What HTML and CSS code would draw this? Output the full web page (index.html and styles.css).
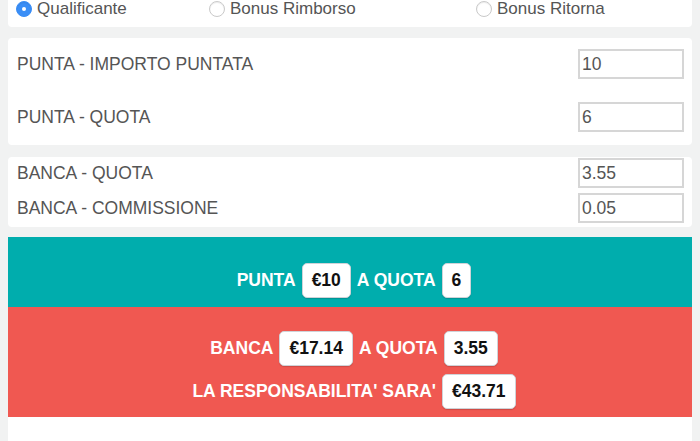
FILE: index.html
```html
<!DOCTYPE html>
<html lang="it">
<head>
<meta charset="utf-8">
<title>Calcolatore</title>
<link rel="stylesheet" href="styles.css">
</head>
<body>
<div class="panel radios">
  <label class="radio"><span class="dot checked"></span>Qualificante</label>
  <label class="radio"><span class="dot"></span>Bonus Rimborso</label>
  <label class="radio"><span class="dot"></span>Bonus Ritorna</label>
</div>
<div class="panel fields punta">
  <div class="row"><span class="label">PUNTA - IMPORTO PUNTATA</span><span class="input">10</span></div>
  <div class="row"><span class="label">PUNTA - QUOTA</span><span class="input">6</span></div>
</div>
<div class="panel fields banca">
  <div class="row"><span class="label">BANCA - QUOTA</span><span class="input">3.55</span></div>
  <div class="row"><span class="label">BANCA - COMMISSIONE</span><span class="input">0.05</span></div>
</div>
<div class="results">
  <div class="block teal">
    <div class="line">PUNTA <span class="badge">€10</span> A QUOTA <span class="badge">6</span></div>
  </div>
  <div class="block red">
    <div class="line">BANCA <span class="badge">€17.14</span> A QUOTA <span class="badge">3.55</span></div>
    <div class="line">LA RESPONSABILITA' SARA' <span class="badge">€43.71</span></div>
  </div>
  <div class="rest"></div>
</div>
</body>
</html>
```
FILE: styles.css
```css
html, body {
  margin: 0;
  padding: 0;
  background: #f1f2f2;
  font-family: "Liberation Sans", Arial, sans-serif;
  font-size: 17.5px;
  color: #555;
}
body {
  padding: 0 8px;
  height: 441px;
  overflow: hidden;
}
.panel {
  background: #fff;
  border-radius: 4px;
}
.radios {
  display: grid;
  grid-template-columns: 193px 267px 1fr;
  padding: 1px 8px 10px;
  height: 16px;
  margin-bottom: 11px;
  border-top-left-radius: 0;
  border-top-right-radius: 0;
}
.radio {
  display: flex;
  align-items: center;
  height: 16px;
  line-height: 16px;
  font-size: 17px;
  color: #555;
}
.dot {
  width: 14px;
  height: 14px;
  border-radius: 50%;
  border: 1px solid #c9c9c9;
  background: #fff;
  box-shadow: inset 0 1px 1px rgba(0,0,0,0.08);
  margin-right: 5px;
  box-sizing: content-box;
  position: relative;
  flex: none;
}
.dot.checked {
  background: #3a8ef6;
  border-color: #3a8ef6;
}
.dot.checked::after {
  content: "";
  position: absolute;
  left: 5px;
  top: 5px;
  width: 4px;
  height: 4px;
  border-radius: 50%;
  background: #fff;
}
.fields {
  display: flex;
  flex-direction: column;
  padding-left: 9px;
  padding-right: 8px;
  margin-bottom: 12px;
}
.punta {
  padding-top: 11px;
  padding-bottom: 13px;
  gap: 23px;
}
.banca {
  padding-top: 1px;
  padding-bottom: 4px;
  gap: 5px;
}
.row {
  display: flex;
  align-items: center;
  justify-content: space-between;
  height: 30px;
}
.label {
  color: #555;
}
.input {
  box-sizing: border-box;
  width: 106px;
  height: 30px;
  border: 2px solid #d6d6d6;
  padding: 0 2px;
  line-height: 26px;
  color: #555;
  background: #fff;
}
.results {
  margin-top: -2px;
  background: #fff;
}
.block {
  display: flex;
  flex-direction: column;
  align-items: center;
  color: #fff;
  font-weight: bold;
  padding-left: 8px;
}
.teal {
  background: #00adad;
  padding-top: 26px;
  padding-bottom: 9px;
}
.red {
  background: #f05851;
  padding-top: 24px;
  padding-bottom: 8px;
  gap: 8px;
}
.line {
  display: flex;
  align-items: center;
  gap: 6px;
  height: 35px;
}
.badge {
  display: inline-flex;
  align-items: center;
  box-sizing: border-box;
  height: 35px;
  padding: 0 9px;
  background: #fff;
  color: #111;
  border: 1px solid #cfd3d8;
  border-radius: 5px;
  box-shadow: 0 1px 1px rgba(0,0,0,0.15);
}
.rest {
  height: 40px;
}
```
